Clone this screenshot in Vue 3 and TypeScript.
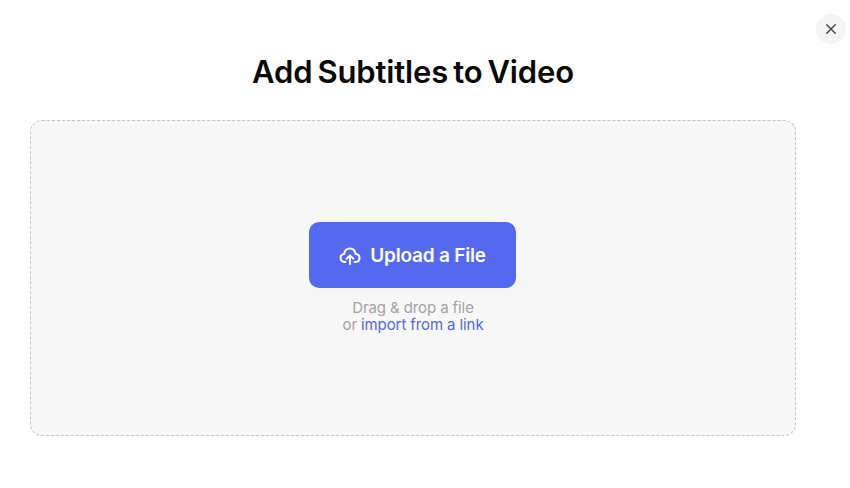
<script setup lang="ts">
const title: string = 'Add Subtitles to Video'
</script>

<template>
  <div class="page">
    <button class="close" aria-label="Close">
      <svg width="12" height="12" viewBox="0 0 12 12" fill="none">
        <path d="M1.8 1.8L10.2 10.2M10.2 1.8L1.8 10.2" stroke="#45454f" stroke-width="1.5" stroke-linecap="round" />
      </svg>
    </button>
    <main class="content">
      <h1 class="title">{{ title }}</h1>
      <section class="drop">
        <button class="upload">
          <svg width="22" height="22" viewBox="0 0 22 22" fill="none" stroke="#fff" stroke-width="2" stroke-linecap="round" stroke-linejoin="round">
            <path d="M6.5 18H5.6C3.2 18 1.5 16.2 1.5 14C1.5 11.9 3.1 10.3 5.1 10.1C5.7 6.5 8 4.5 10.9 4.5C13.8 4.5 16.1 6.8 16.6 10.1C18.8 10.3 20.5 11.9 20.5 14C20.5 16.1 19 17.8 16.8 18H15.5" />
            <path d="M11 20V11.6M7.6 14.8L11 11.4L14.4 14.8" />
          </svg>
          <span>Upload a File</span>
        </button>
        <p class="hint">Drag &amp; drop a file<br />or <a class="link" href="#">import from a link</a></p>
      </section>
    </main>
  </div>
</template>

<style>
html, body { margin: 0; background: #fff; }
</style>

<style scoped>
.page {
  position: relative;
  width: 850px;
  height: 488px;
  overflow: hidden;
  background: #fff;
  font-family: Inter, "Liberation Sans", sans-serif;
}
.close {
  position: absolute;
  top: 14px;
  left: 816px;
  width: 30px;
  height: 30px;
  padding: 0;
  border: 0;
  border-radius: 50%;
  background: #f4f4f5;
  display: flex;
  align-items: center;
  justify-content: center;
}
.content {
  width: 766px;
  margin-left: 30px;
  padding-top: 52px;
  display: flex;
  flex-direction: column;
  align-items: center;
}
.title {
  margin: 0 0 28px;
  font-size: 31px;
  line-height: 40px;
  font-weight: 600;
  letter-spacing: -0.15px;
  word-spacing: -2.6px;
  color: #0a0a0a;
}
.drop {
  box-sizing: border-box;
  width: 766px;
  height: 316px;
  padding-top: 101px;
  border: 1px dashed #c4c4c4;
  border-radius: 12px;
  background: #f7f7f7;
  display: flex;
  flex-direction: column;
  align-items: center;
}
.upload {
  width: 207px;
  height: 66px;
  margin-right: 1px;
  padding: 0;
  border: 0;
  border-radius: 10px;
  background: #5568f2;
  color: #fff;
  font-family: inherit;
  font-size: 19px;
  font-weight: 600;
  letter-spacing: -0.2px;
  display: flex;
  align-items: center;
  justify-content: center;
  gap: 9px;
}
.hint {
  margin: 11px 0 0;
  font-size: 15px;
  letter-spacing: -0.1px;
  line-height: 17px;
  text-align: center;
  color: #a3a3a3;
}
.link {
  color: #5568e0;
  text-decoration: none;
}
</style>
